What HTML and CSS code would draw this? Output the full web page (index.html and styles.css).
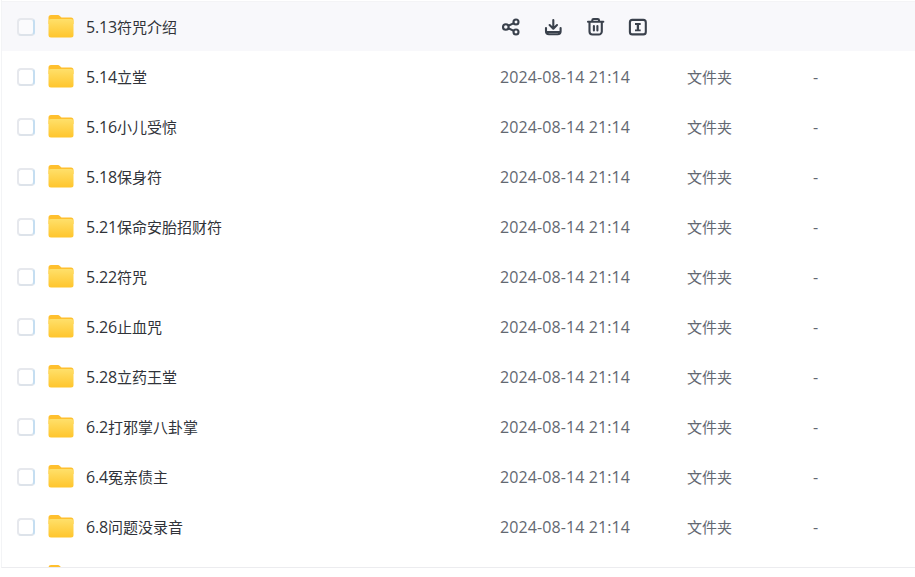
FILE: index.html
```html
<!DOCTYPE html>
<html lang="zh-CN">
<head>
<meta charset="utf-8">
<title>文件列表</title>
<link rel="stylesheet" href="styles.css">
</head>
<body>
<svg class="defs" width="0" height="0" aria-hidden="true">
  <defs>
    <linearGradient id="fg" x1="0" y1="0" x2="0" y2="1">
      <stop offset="0" stop-color="#ffe06a"/>
      <stop offset="1" stop-color="#ffc52c"/>
    </linearGradient>
    <symbol id="folder" viewBox="0 0 26 24">
      <path d="M0.500 3.500a2.500 2.500 0 0 1 2.500-2.500h6.500c1 0 1.600.3 2.300 1l1.700 1.500h9.500a2.500 2.500 0 0 1 2.500 2.500v4h-25z" fill="#ffc02e"/>
      <rect x="0.500" y="5" width="25" height="18.500" rx="2.500" fill="url(#fg)"/>
    </symbol>
  </defs>
</svg>
<main class="list">
  <div class="row hover">
    <span class="check"></span>
    <svg class="folder"><use href="#folder"/></svg>
    <span class="name"><span class="num">5.13</span>符咒介绍</span>
    <div class="actions">
      <svg class="act" viewBox="0 0 20 20" fill="none" stroke="#3a414c" stroke-width="2.100"><circle cx="4.800" cy="10" r="2.800"/><circle cx="15" cy="5" r="2.500"/><circle cx="15" cy="15" r="2.500"/><path d="M7.200 8.800l5.700-2.700M7.200 11.200l5.700 2.700"/></svg>
      <svg class="act" viewBox="0 0 20 20" fill="none" stroke="#3a414c" stroke-width="2.100" stroke-linecap="round" stroke-linejoin="round"><path d="M10.300 3v8.500M6.600 8.100l3.700 3.600 3.700-3.600"/><path d="M3 11v3.300a3 3 0 0 0 3 3h8.600a3 3 0 0 0 3-3v-3.300"/><path d="M3.500 15h13.600" stroke-width="2"/></svg>
      <svg class="act" viewBox="0 0 20 20" fill="none" stroke="#3a414c" stroke-width="2.100" stroke-linecap="round" stroke-linejoin="round"><path d="M2 4.800h15.300M6.300 4.500V3.300c0-.8.500-1.300 1.300-1.300h4.100c.8 0 1.300.5 1.300 1.300v1.200"/><path d="M3.500 5v9.500a3 3 0 0 0 3 3h6.300a3 3 0 0 0 3-3V5"/><path d="M7.900 9v4.500M11.400 9v4.500"/></svg>
      <svg class="act" viewBox="0 0 20 20" fill="none" stroke="#3a414c" stroke-width="2.100" stroke-linejoin="round"><rect x="1.900" y="2.900" width="15.900" height="14.500" rx="2.500"/><path d="M7 7h5.700M7 13.300h5.700" stroke-width="1.800"/><path d="M9.900 7v6.300" stroke-width="2.300"/></svg>
    </div>
  </div>
  <div class="row"><span class="check"></span><svg class="folder"><use href="#folder"/></svg><span class="name"><span class="num">5.14</span>立堂</span><span class="date">2024-08-14 21:14</span><span class="type">文件夹</span><span class="size">-</span></div>
  <div class="row"><span class="check"></span><svg class="folder"><use href="#folder"/></svg><span class="name"><span class="num">5.16</span>小儿受惊</span><span class="date">2024-08-14 21:14</span><span class="type">文件夹</span><span class="size">-</span></div>
  <div class="row"><span class="check"></span><svg class="folder"><use href="#folder"/></svg><span class="name"><span class="num">5.18</span>保身符</span><span class="date">2024-08-14 21:14</span><span class="type">文件夹</span><span class="size">-</span></div>
  <div class="row"><span class="check"></span><svg class="folder"><use href="#folder"/></svg><span class="name"><span class="num">5.21</span>保命安胎招财符</span><span class="date">2024-08-14 21:14</span><span class="type">文件夹</span><span class="size">-</span></div>
  <div class="row"><span class="check"></span><svg class="folder"><use href="#folder"/></svg><span class="name"><span class="num">5.22</span>符咒</span><span class="date">2024-08-14 21:14</span><span class="type">文件夹</span><span class="size">-</span></div>
  <div class="row"><span class="check"></span><svg class="folder"><use href="#folder"/></svg><span class="name"><span class="num">5.26</span>止血咒</span><span class="date">2024-08-14 21:14</span><span class="type">文件夹</span><span class="size">-</span></div>
  <div class="row"><span class="check"></span><svg class="folder"><use href="#folder"/></svg><span class="name"><span class="num">5.28</span>立药王堂</span><span class="date">2024-08-14 21:14</span><span class="type">文件夹</span><span class="size">-</span></div>
  <div class="row"><span class="check"></span><svg class="folder"><use href="#folder"/></svg><span class="name"><span class="num">6.2</span>打邪掌八卦掌</span><span class="date">2024-08-14 21:14</span><span class="type">文件夹</span><span class="size">-</span></div>
  <div class="row"><span class="check"></span><svg class="folder"><use href="#folder"/></svg><span class="name"><span class="num">6.4</span>冤亲债主</span><span class="date">2024-08-14 21:14</span><span class="type">文件夹</span><span class="size">-</span></div>
  <div class="row"><span class="check"></span><svg class="folder"><use href="#folder"/></svg><span class="name"><span class="num">6.8</span>问题没录音</span><span class="date">2024-08-14 21:14</span><span class="type">文件夹</span><span class="size">-</span></div>
  <div class="row"><span class="check"></span><svg class="folder"><use href="#folder"/></svg></div>
</main>
</body>
</html>
```
FILE: styles.css
```css
* { box-sizing: border-box; }
html, body { margin: 0; padding: 0; background: #fff; }
body {
  width: 915px;
  height: 577px;
  overflow: hidden;
  font-family: "Open Sans", "Noto Sans CJK SC", sans-serif;
}
.defs { display: block; height: 0; }
.list {
  height: 568px;
  margin-left: 1px;
  padding-top: 1px;
  overflow: hidden;
  border-left: 1px solid #f3f4f6;
  border-bottom: 1px solid #ececef;
}
.row {
  display: flex;
  align-items: center;
  height: 50px;
  padding-left: 15px;
  flex: none;
}
.row.hover {
  background: #f8f8fb;
  box-shadow: inset 0 1px 0 #f4f4f6;
}
.check {
  flex: none;
  width: 18px;
  height: 18px;
  margin-top: 2px;
  border: 2px solid #e6e8ed;
  border-right-color: #c5def1;
  border-bottom-color: #dde3ea;
  border-radius: 4px;
  background: #fff;
}
.hover .check { background: #fbfbfd; }
.folder {
  flex: none;
  width: 26px;
  height: 24px;
  margin-left: 13px;
}
.name {
  flex: none;
  width: 414px;
  margin-left: 12px;
  margin-top: 2px;
  font-size: 15px;
  color: #303339;
}
.num { font-size: 16px; letter-spacing: -.15px; }
.date {
  flex: none;
  width: 187px;
  margin-top: 2px;
  font-size: 16px;
  letter-spacing: .1px;
  color: #636871;
}
.type {
  flex: none;
  width: 126px;
  font-size: 15px;
  color: #636871;
}
.size {
  flex: none;
  margin-top: 2px;
  font-size: 16px;
  color: #636871;
}
.actions {
  display: flex;
  gap: 22.500px;
  align-items: center;
  margin-top: 2px;
  padding-left: .500px;
}
.act {
  flex: none;
  width: 20px;
  height: 20px;
}
```
